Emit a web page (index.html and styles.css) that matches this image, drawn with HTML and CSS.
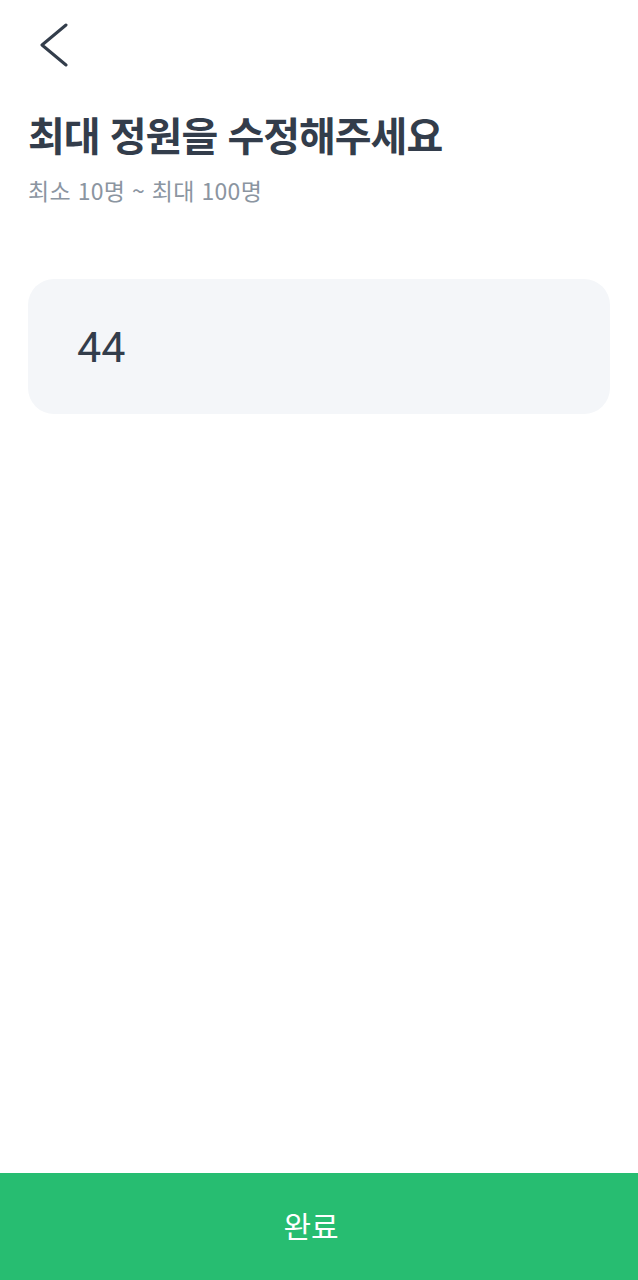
FILE: index.html
```html
<!DOCTYPE html>
<html lang="ko">
<head>
  <meta charset="UTF-8" />
  <meta name="viewport" content="width=device-width, initial-scale=1.0"/>
  <title>최대 정원 수정</title>
  <link rel="stylesheet" href="styles.css">
</head>
<body>
  <div class="page">
    <header class="top-bar">
      <button class="back-btn" aria-label="뒤로">
        <svg width="28" height="44" viewBox="0 0 28 44">
          <polyline points="26,2 2,22 26,42" fill="none" stroke="#333d4b" stroke-width="3" stroke-linecap="round" stroke-linejoin="round" />
        </svg>
      </button>
    </header>

    <main class="content">
      <h1 class="title">최대 정원을 수정해주세요</h1>
      <p class="hint">최소 10명 ~ 최대 100명</p>

      <div class="field">
        <input class="field-input" type="text" inputmode="numeric" value="44">
      </div>
    </main>

    <button class="submit-btn">완료</button>
  </div>
</body>
</html>
```

FILE: styles.css
```css
* {
  box-sizing: border-box;
}

body {
  margin: 0;
  font-family: "Noto Sans CJK KR", "Noto Sans", sans-serif;
  background: #fff;
  color: #333d4b;
}

.page {
  min-height: 100vh;
  display: flex;
  flex-direction: column;
}

.top-bar {
  height: 110px;
  padding: 23px 0 0 40px;
}

.back-btn {
  display: block;
  border: none;
  background: none;
  padding: 0;
  cursor: pointer;
}

.content {
  flex: 1;
  padding: 0 28px;
}

.title {
  margin: 0;
  font-size: 40px;
  font-weight: 700;
  letter-spacing: -1px;
  line-height: 1.2;
  color: #333d4b;
}

.hint {
  margin: 16px 0 0;
  font-size: 23px;
  line-height: 1.4;
  color: #8b95a1;
  letter-spacing: 0.3px;
}

.field {
  margin-top: 73px;
  height: 135px;
  background: #f4f6f9;
  border-radius: 26px;
  display: flex;
  align-items: center;
  padding: 0 49px;
}

.field-input {
  width: 100%;
  border: none;
  outline: none;
  background: transparent;
  font-family: Roboto, "Noto Sans", sans-serif;
  font-size: 43px;
  color: #333d4b;
  padding: 0;
}

.submit-btn {
  height: 107px;
  border: none;
  padding: 0 16px 4px 0;
  background: #27bd71;
  color: #fff;
  font-family: inherit;
  font-size: 30px;
  cursor: pointer;
}
```
